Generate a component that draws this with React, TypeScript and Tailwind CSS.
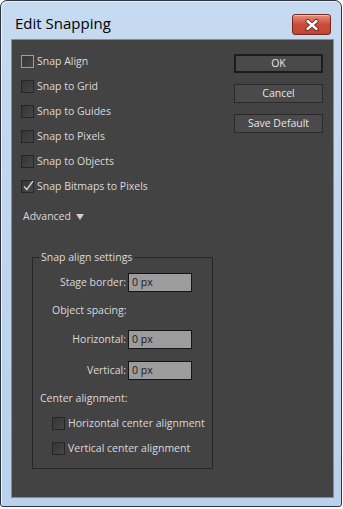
import React from 'react';

const font = { fontFamily: '"Open Sans", "Noto Sans", sans-serif' };

function Check({ checked, focused }: { checked?: boolean; focused?: boolean }) {
  return (
    <span
      className={
        'relative flex h-[13px] w-[13px] shrink-0 items-center justify-center border bg-gradient-to-br from-[#353535] to-[#474747] ' +
        (focused ? 'border-[#d89a00]' : 'border-[#262626]')
      }
    >
      {checked && (
        <svg width="12" height="12" viewBox="0 0 12 12" className="absolute left-[0px] top-[-1px]">
          <path d="M2 6.5 L4.8 9.5 L11 1" fill="none" stroke="#c8c8c8" strokeWidth="1.5" />
        </svg>
      )}
    </span>
  );
}

function CheckRow({ label, checked, focused }: { label: string; checked?: boolean; focused?: boolean }) {
  return (
    <div className="flex h-[25px] items-center gap-[3px]">
      <Check checked={checked} focused={focused} />
      <span className="text-[10.5px] text-[#dadada]">{label}</span>
    </div>
  );
}

function Btn({ label, primary }: { label: string; primary?: boolean }) {
  return (
    <div
      className={
        'flex h-[19px] w-[89px] items-center justify-center bg-[#4a4a4a] text-[10.5px] text-[#e6e6e6] ' +
        (primary ? 'border-2 border-[#1c1c1c]' : 'border border-[#2a2a2a]')
      }
    >
      {label}
    </div>
  );
}

function Field({ label }: { label: string }) {
  return (
    <div className="flex h-[19px] items-center">
      <span className="w-[95px] pr-[2px] text-right text-[10.5px] text-[#dadada]">{label}</span>
      <div className="flex h-[19px] w-[64px] items-center border border-[#151515] bg-[#9c9c9c] pl-[3px] text-[10.5px] text-[#1a1a1a]">
        0 px
      </div>
    </div>
  );
}

export default function App() {
  return (
    <div className="h-[509px] w-[343px] bg-white" style={font}>
      <div className="relative flex h-[507px] w-[342px] flex-col rounded-t-[7px] rounded-b-[3px] border border-[#2c3540] bg-gradient-to-b from-[#c6daf0] to-[#b9d1ec] pb-[8px] pl-[10px] pr-[7px] pt-[38px] shadow-[inset_1px_1px_0_#e8f1fb]">
        {/* Title bar */}
        <div className="absolute left-[14px] top-[12px] text-[15px] leading-[20px] text-black">Edit Snapping</div>
        <div className="absolute left-[291px] top-[13px] flex h-[21px] w-[39px] items-center justify-center rounded-[3px] border border-[#6e2a22] bg-gradient-to-b from-[#e48d7f] via-[#cc4b37] to-[#c24634] shadow-[inset_0_1px_0_#f3b8ad]">
          <svg width="14" height="12" viewBox="0 0 14 12">
            <path d="M2.5 2 L11.5 10 M11.5 2 L2.5 10" stroke="#5a1c14" strokeWidth="4" strokeLinecap="round" />
            <path d="M2.5 2 L11.5 10 M11.5 2 L2.5 10" stroke="#ffffff" strokeWidth="2.4" strokeLinecap="round" />
          </svg>
        </div>

        {/* Client area */}
        <div className="flex flex-1 flex-col border border-[#7d8fa3] bg-[#434343] pl-[9px] pt-[9px]">
          <div className="flex justify-between pr-[10px]">
            <div className="flex flex-col">
              <CheckRow label="Snap Align" focused />
              <CheckRow label="Snap to Grid" />
              <CheckRow label="Snap to Guides" />
              <CheckRow label="Snap to Pixels" />
              <CheckRow label="Snap to Objects" />
              <CheckRow label="Snap Bitmaps to Pixels" checked />
            </div>
            <div className="mt-[5px] flex flex-col gap-[11px]">
              <Btn label="OK" primary />
              <Btn label="Cancel" />
              <Btn label="Save Default" />
            </div>
          </div>

          <div className="mt-[5px] flex h-[25px] items-center gap-[5px] pl-[2px] text-[10.5px] text-[#dadada]">
            Advanced
            <svg width="8" height="6" viewBox="0 0 8 6">
              <path d="M0 0 L8 0 L4 6 Z" fill="#d0d0d0" />
            </svg>
          </div>

          <fieldset className="ml-[11px] mt-[21px] w-[181px] border border-[#262626] pb-[7px]">
            <legend className="ml-[6px] px-[2px] text-[10.5px] leading-[14px] text-[#dadada]">Snap align settings</legend>
            <div className="mt-[9px] flex flex-col">
              <Field label="Stage border:" />
              <div className="mt-[10px] flex h-[17px] items-center pl-[19px] text-[10.5px] text-[#dadada]">Object spacing:</div>
              <div className="mt-[11px]">
                <Field label="Horizontal:" />
              </div>
              <div className="mt-[12px]">
                <Field label="Vertical:" />
              </div>
              <div className="mt-[10px] flex h-[17px] items-center pl-[7px] text-[10.5px] text-[#dadada]">Center alignment:</div>
              <div className="mt-[4px] flex flex-col pl-[19px]">
                <CheckRow label="Horizontal center alignment" />
                <CheckRow label="Vertical center alignment" />
              </div>
            </div>
          </fieldset>
        </div>
      </div>
    </div>
  );
}
